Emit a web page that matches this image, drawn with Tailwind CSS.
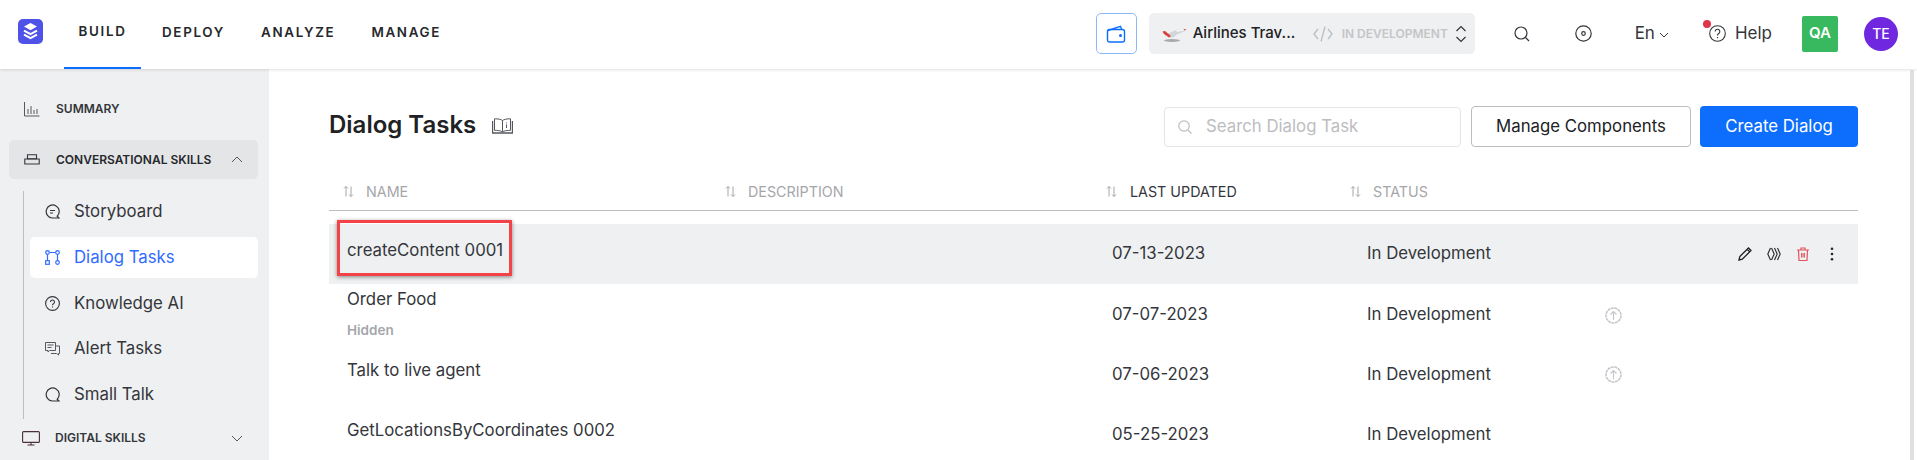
<!DOCTYPE html>
<html lang="en">
<head>
  <meta charset="UTF-8" />
  <title>Dialog Tasks</title>
  <script src="https://cdn.jsdelivr.net/npm/@tailwindcss/browser@4"></script>
</head>
<body class="h-screen overflow-hidden bg-white font-['Inter',sans-serif] text-[#202124] flex flex-col">

  <!-- Top bar -->
  <header class="relative z-10 h-[69px] shrink-0 flex items-center bg-white shadow-[0_1px_3px_rgba(0,0,0,0.12)]">
    <div class="ml-[18px] w-[25px] h-[25px] -mt-[7px] rounded-[5px] bg-[#4f52e6] flex items-center justify-center">
      <svg class="w-[17px] h-[19px]" viewBox="0 0 17 19" fill="none">
        <path d="M8.500 1 15 4.600 8.500 8.200 2 4.600Z" fill="#fff"/>
        <path d="M2 8.600l6.500 3.600L15 8.600M2 12.600l6.500 3.600 6.500-3.600" stroke="#fff" stroke-width="2"/>
      </svg>
    </div>
    <nav class="ml-[21px] flex h-full text-[13.400px] font-semibold tracking-[0.125em] text-[#26282c]">
      <a class="w-[77px] flex items-center justify-center pb-[4px] border-b-[2px] border-[#0d6efd]">BUILD</a>
      <a class="ml-[21px] flex items-center pb-[4px]">DEPLOY</a>
      <a class="ml-[36px] flex items-center pb-[4px]">ANALYZE</a>
      <a class="ml-[36px] flex items-center pb-[4px]">MANAGE</a>
    </nav>

    <div class="ml-auto flex items-center h-full pb-[2px]">
      <button class="w-[41px] h-[41px] rounded-[5px] border border-[#8fb8fb] flex items-center justify-center">
        <svg class="w-[20px] h-[20px]" viewBox="0 0 20 20" fill="none" stroke="#0d6efd" stroke-width="1.400">
          <path d="M2 6.500 14.500 2.300 15.500 5"/>
          <rect x="1.500" y="5.500" width="17" height="12.500" rx="2"/>
          <circle cx="14.500" cy="11.500" r="0.800" fill="#0d6efd"/>
        </svg>
      </button>
      <div class="ml-3 w-[326px] h-[41px] rounded-[5px] bg-[#eff0f1] flex items-center pl-[13px]">
        <svg class="w-[25px] h-[18px]" viewBox="0 0 25 18">
          <ellipse cx="10" cy="15.500" rx="8" ry="1.500" fill="#a8a8a8"/>
          <path d="M2 8 6 8.500 14 5 21 3.500 24.500 4.500 22 6.500 15 9.500 11 12.500 7 12.500Z" fill="#d4d5da"/>
          <path d="M14 5 21 3.500 24.500 4.500 22 5.500 15 7Z" fill="#f4f4f6"/>
          <path d="M0.500 6.500 3 6 6 8.500 9 11 7 12.500 2 9Z" fill="#d8413a"/>
          <path d="M21.500 4 24.500 4.500 22.500 5.500Z" fill="#d8413a"/>
        </svg>
        <span class="ml-[6px] w-[120px] text-[15px] font-medium text-[#202124]">Airlines Trav...</span>
        <svg class="w-[20px] h-[18px]" viewBox="0 0 20 18" fill="none" stroke="#bcbdc1" stroke-width="1.300">
          <path d="M5 4 1 9l4 5M15 4l4 5-4 5M12 1.500 8 16.500"/>
        </svg>
        <span class="ml-[9px] text-[12px] font-semibold text-[#c4c5c8]">IN DEVELOPMENT</span>
        <svg class="ml-[7px] w-[12px] h-[18px]" viewBox="0 0 12 18" fill="none" stroke="#33363b" stroke-width="1.200">
          <path d="M1.500 6 6 1.500 10.500 6M1.500 12 6 16.500 10.500 12"/>
        </svg>
      </div>
      <svg class="ml-[39px] w-[16px] h-[16px]" viewBox="0 0 16 16" fill="none" stroke="#33363b" stroke-width="1.200">
        <circle cx="7" cy="7" r="6"/><path d="M11.500 11.500 15 15"/>
      </svg>
      <svg class="ml-[45px] w-[17px] h-[17px]" viewBox="0 0 17 17" fill="none" stroke="#33363b" stroke-width="1.200">
        <circle cx="8.500" cy="8.500" r="7.700"/><circle cx="8.500" cy="8.500" r="1.800"/>
      </svg>
      <span class="ml-[43px] text-[17px] text-[#33363b]">En</span>
      <svg class="ml-[4px] mt-[3px] w-[10px] h-[6px]" viewBox="0 0 10 6" fill="none" stroke="#33363b" stroke-width="1">
        <path d="M1 1l4 4 4-4"/>
      </svg>
      <div class="relative ml-[40px] w-[17px] h-[17px]">
        <svg class="w-[17px] h-[17px]" viewBox="0 0 17 17" fill="none" stroke="#33363b" stroke-width="1.100">
          <circle cx="8.500" cy="8.500" r="7.800"/>
          <path d="M6.200 6.500a2.300 2.300 0 1 1 3.500 2c-.8.500-1.200.900-1.200 1.900M8.500 12v1.200"/>
        </svg>
        <span class="absolute -left-[6px] -top-[5px] w-[8px] h-[8px] rounded-full bg-[#e0344a]"></span>
      </div>
      <span class="ml-[9px] text-[17px] text-[#33363b]">Help</span>
      <span class="ml-[30px] w-[36px] h-[36px] rounded-[2px] bg-[#38b960] text-white text-[15px] font-semibold flex items-center justify-center">QA</span>
      <span class="ml-[26px] mr-[19px] w-[34px] h-[34px] rounded-full bg-[#7027e0] text-white text-[14px] font-medium flex items-center justify-center">TE</span>
    </div>
  </header>

  <div class="flex-1 flex min-h-0">
    <!-- Sidebar -->
    <aside class="w-[269px] shrink-0 bg-[#eff0f1] pt-[20px] pl-[9px] pr-[11px]">
      <div class="h-[40px] flex items-center pl-[15px] text-[12px] font-semibold text-[#33363b]">
        <svg class="w-[16px] h-[16px]" viewBox="0 0 16 16" fill="none" stroke="#55585e" stroke-width="1">
          <path d="M.500 1v14h15M4 8v5M7 5v8M10 9v4M13 8v5"/>
        </svg>
        <span class="ml-[16px]">SUMMARY</span>
      </div>
      <div class="mt-[11px] h-[39px] rounded-[5px] bg-[#e4e5e7] flex items-center pl-[15px] pr-[15px] text-[12px] font-semibold text-[#26282c]">
        <svg class="w-[16px] h-[11px]" viewBox="0 0 16 11" fill="none" stroke="#33363b" stroke-width="1.100">
          <path d="M3.500 .800h9v4h-9z"/><path d="M.800 5h14.400v5H.800z"/>
        </svg>
        <span class="ml-[16px]">CONVERSATIONAL SKILLS</span>
        <svg class="ml-auto w-[12px] h-[7px]" viewBox="0 0 12 7" fill="none" stroke="#55585e" stroke-width="1"><path d="M1 6l5-5 5 5"/></svg>
      </div>
      <div class="mt-[12px] ml-[14px] border-l border-[#bdbec1] h-[228px] flex flex-col pl-[6px] text-[16.800px] text-[#33363b]">
        <div class="h-[41px] flex items-center pl-[15px]">
          <svg class="w-[15px] h-[15px]" viewBox="0 0 15 15" fill="none" stroke="#33363b" stroke-width="1.200">
            <path d="M14 14l-1.800-1.800A6.500 6.500 0 1 0 7.500 14H14Z"/><path d="M5 6.500h5M5 9h3"/>
          </svg>
          <span class="ml-[14px]">Storyboard</span>
        </div>
        <div class="h-[41px] mt-[5px] rounded-[5px] bg-white flex items-center pl-[15px] text-[#2f6bff]">
          <svg class="w-[15px] h-[15px]" viewBox="0 0 15 15" fill="none" stroke="#2f6bff" stroke-width="1.200">
            <circle cx="2.500" cy="2.500" r="1.800"/><circle cx="12.500" cy="2.500" r="1.800"/><circle cx="12.500" cy="12.500" r="1.800"/>
            <rect x=".700" y="10.700" width="3.600" height="3.600"/><path d="M4.500 2.500h6M2.500 4.500v6M12.500 4.500v6"/>
          </svg>
          <span class="ml-[14px]">Dialog Tasks</span>
        </div>
        <div class="h-[41px] mt-[5px] flex items-center pl-[15px]">
          <svg class="w-[15px] h-[15px]" viewBox="0 0 15 15" fill="none" stroke="#33363b" stroke-width="1.100">
            <circle cx="7.500" cy="7.500" r="6.900"/><path d="M5.500 6a2 2 0 1 1 3 1.700c-.7.400-1 .8-1 1.500M7.500 10.500v1"/>
          </svg>
          <span class="ml-[14px]">Knowledge AI</span>
        </div>
        <div class="h-[41px] mt-[4px] flex items-center pl-[15px]">
          <svg class="w-[15px] h-[15px]" viewBox="0 0 15 15" fill="none" stroke="#55585e" stroke-width="1">
            <path d="M.500 1.500h10v8h-6l-1.500 1.500v-1.500H.500zM2.500 4h6M2.500 6.500h4M11 5h3.500v7.500h-1v1.500l-2-1.500H6"/>
          </svg>
          <span class="ml-[14px]">Alert Tasks</span>
        </div>
        <div class="h-[41px] mt-[5px] flex items-center pl-[15px]">
          <svg class="w-[15px] h-[15px]" viewBox="0 0 15 15" fill="none" stroke="#33363b" stroke-width="1.200">
            <path d="M14 14l-1.800-1.800A6.500 6.500 0 1 0 7.500 14H14Z"/>
          </svg>
          <span class="ml-[14px]">Small Talk</span>
        </div>
      </div>
      <div class="-mt-[1px] h-[40px] flex items-center pl-[13px] pr-[15px] text-[12px] font-semibold text-[#33363b]">
        <svg class="w-[18px] h-[15px]" viewBox="0 0 18 15" fill="none" stroke="#4a3038" stroke-width="1.100">
          <rect x=".600" y=".600" width="16.800" height="10.800" rx="1"/><path d="M9 11.500v2.500M5.500 14h7"/>
        </svg>
        <span class="ml-[15px]">DIGITAL SKILLS</span>
        <svg class="ml-auto w-[12px] h-[7px]" viewBox="0 0 12 7" fill="none" stroke="#55585e" stroke-width="1"><path d="M1 1l5 5 5-5"/></svg>
      </div>
    </aside>

    <!-- Content -->
    <main class="flex-1 min-w-0 pl-[60px] pr-[52px] overflow-hidden">
      <div class="mt-[37px] h-[41px] flex items-center">
        <h1 class="text-[24px] font-semibold text-[#202124] -mt-[3px]">Dialog Tasks</h1>
        <svg class="ml-[16px] w-[21px] h-[16px] -mt-[1px]" viewBox="0 0 21 16" fill="none" stroke="#55585e" stroke-width="1">
          <path d="M10.500 2.500C9 1.300 6 .800 2.500.800v11.500c3 0 6 .4 8 1.500 2-1.100 5-1.500 8-1.500V.800c-3.500 0-6.500.5-8 1.700ZM10.500 2.500v11"/>
          <path d="M.500 3v12h20V3" stroke-width="1.400"/><path d="M14.500 4.500v.8M14.500 6.500v3.500"/>
        </svg>
        <div class="ml-auto w-[297px] h-[40px] rounded-[4px] border border-[#e4e5e7] flex items-center pl-[13px]">
          <svg class="w-[14px] h-[14px]" viewBox="0 0 14 14" fill="none" stroke="#bcbdc1" stroke-width="1.200">
            <circle cx="6" cy="6" r="5.200"/><path d="M10 10l3.500 3.500"/>
          </svg>
          <span class="ml-[14px] text-[16.800px] text-[#bcbdc1]">Search Dialog Task</span>
        </div>
        <button class="ml-[10px] w-[220px] h-[41px] rounded-[4px] border border-[#bcbdc1] text-[16.800px] text-[#202124]">Manage Components</button>
        <button class="ml-[9px] w-[158px] h-[41px] rounded-[4px] bg-[#0d6efd] text-[16.800px] text-white">Create Dialog</button>
      </div>

      <!-- Table head -->
      <div class="mt-[23px] h-[41px] grid grid-cols-[382px_382px_244px_1fr] items-center border-b border-[#bdbec1] text-[14.300px] text-[#a5a6aa] pt-[3px]">
        <div class="flex items-center pl-[14px]">
          <svg class="w-[11px] h-[11px]" viewBox="0 0 11 11" fill="none" stroke="#a5a6aa" stroke-width="1"><path d="M3 10.500V.500M1 2.500l2-2 2 2M8 .500v10M6 8.500l2 2 2-2"/></svg>
          <span class="ml-[12px]">NAME</span>
        </div>
        <div class="flex items-center pl-[14px]">
          <svg class="w-[11px] h-[11px]" viewBox="0 0 11 11" fill="none" stroke="#a5a6aa" stroke-width="1"><path d="M3 10.500V.500M1 2.500l2-2 2 2M8 .500v10M6 8.500l2 2 2-2"/></svg>
          <span class="ml-[12px]">DESCRIPTION</span>
        </div>
        <div class="flex items-center pl-[13px] text-[#33363b]">
          <svg class="w-[11px] h-[11px]" viewBox="0 0 11 11" fill="none" stroke="#a5a6aa" stroke-width="1"><path d="M3 10.500V.500M1 2.500l2-2 2 2M8 .500v10M6 8.500l2 2 2-2"/></svg>
          <span class="ml-[13px]">LAST UPDATED</span>
        </div>
        <div class="flex items-center pl-[13px]">
          <svg class="w-[11px] h-[11px]" viewBox="0 0 11 11" fill="none" stroke="#a5a6aa" stroke-width="1"><path d="M3 10.500V.500M1 2.500l2-2 2 2M8 .500v10M6 8.500l2 2 2-2"/></svg>
          <span class="ml-[12px]">STATUS</span>
        </div>
      </div>

      <!-- Rows -->
      <div class="mt-[13px] text-[16.800px] text-[#33363b]">
        <div class="relative h-[60px] bg-[#eff0f1] grid grid-cols-[382px_382px_244px_1fr] items-center">
          <div class="pl-[18px] -mt-[7px]">createContent 0001</div>
          <div></div>
          <div class="pl-[19px]">07-13-2023</div>
          <div class="pl-[30px] flex items-center">
            <span>In Development</span>
            <div class="ml-auto mr-[19px] flex items-center gap-[15px]">
              <svg class="w-[14px] h-[14px]" viewBox="0 0 14 14" fill="none" stroke="#202124" stroke-width="1.300"><path d="M1 13l.8-3.500L10.500 1l2.500 2.500-8.700 8.700ZM9.200 2.300l2.500 2.500"/></svg>
              <svg class="w-[14px] h-[14px]" viewBox="0 0 14 14" fill="none" stroke="#26282c" stroke-width="1.100"><path d="M3.500 1 .8 7l2.700 6M4.500 1l2.700 6-2.700 6M7.500 1l2.700 6-2.700 6M10.500 1l2.700 6-2.700 6"/></svg>
              <svg class="w-[14px] h-[14px]" viewBox="0 0 14 14" fill="none" stroke="#e2535c" stroke-width="1.200"><path d="M1 3h12M2.500 3l.5 10.500h8L11.500 3M5 3V1h4v2"/><path d="M5.800 6v4.500M8.200 6v4.500" stroke-width="1.500"/></svg>
              <svg class="w-[14px] h-[14px]" viewBox="0 0 14 14" fill="#26282c"><circle cx="7" cy="1.800" r="1.300"/><circle cx="7" cy="7" r="1.300"/><circle cx="7" cy="12.200" r="1.300"/></svg>
            </div>
          </div>
          <!-- annotation box drawn over the row -->
          <div class="absolute left-[8px] -top-[4px] w-[175px] h-[56px] border-[3px] border-[#f44348] shadow-[0_1px_4px_rgba(0,0,0,0.45)]"></div>
        </div>

        <div class="h-[59px] grid grid-cols-[382px_382px_244px_1fr] items-center">
          <div class="pl-[18px]">
            <div>Order Food</div>
            <div class="mt-[8px] text-[13.500px] font-semibold text-[#a5a6aa]">Hidden</div>
          </div>
          <div></div>
          <div class="pl-[19px] mt-[3px]">07-07-2023</div>
          <div class="pl-[30px] mt-[3px] flex items-center">
            <span class="w-[238px]">In Development</span>
            <svg class="w-[17px] h-[17px]" viewBox="0 0 17 17" fill="none" stroke="#c3c5ca" stroke-width="1.500">
              <circle cx="8.500" cy="8.500" r="7.500" stroke-dasharray="3 .6"/><path d="M8.500 13V4.500M5.500 7.500l3-3 3 3" stroke-width="1.100"/>
            </svg>
          </div>
        </div>

        <div class="h-[60px] grid grid-cols-[382px_382px_244px_1fr] items-center">
          <div class="pl-[18px] -mt-[5px]">Talk to live agent</div>
          <div></div>
          <div class="pl-[19px] mt-[3px]">07-06-2023</div>
          <div class="pl-[30px] mt-[3px] flex items-center">
            <span class="w-[238px]">In Development</span>
            <svg class="w-[17px] h-[17px]" viewBox="0 0 17 17" fill="none" stroke="#c3c5ca" stroke-width="1.500">
              <circle cx="8.500" cy="8.500" r="7.500" stroke-dasharray="3 .6"/><path d="M8.500 13V4.500M5.500 7.500l3-3 3 3" stroke-width="1.100"/>
            </svg>
          </div>
        </div>

        <div class="h-[60px] grid grid-cols-[382px_382px_244px_1fr] items-center">
          <div class="pl-[18px] -mt-[5px]">GetLocationsByCoordinates 0002</div>
          <div></div>
          <div class="pl-[19px] mt-[3px]">05-25-2023</div>
          <div class="pl-[30px] mt-[3px]">In Development</div>
        </div>
      </div>
    </main>

    <!-- Scrollbar track -->
    <div class="w-[4px] mr-[3px] shrink-0 mt-[1px] rounded-t-[2px] bg-[#e0e0e0]"></div>
  </div>
</body>
</html>
